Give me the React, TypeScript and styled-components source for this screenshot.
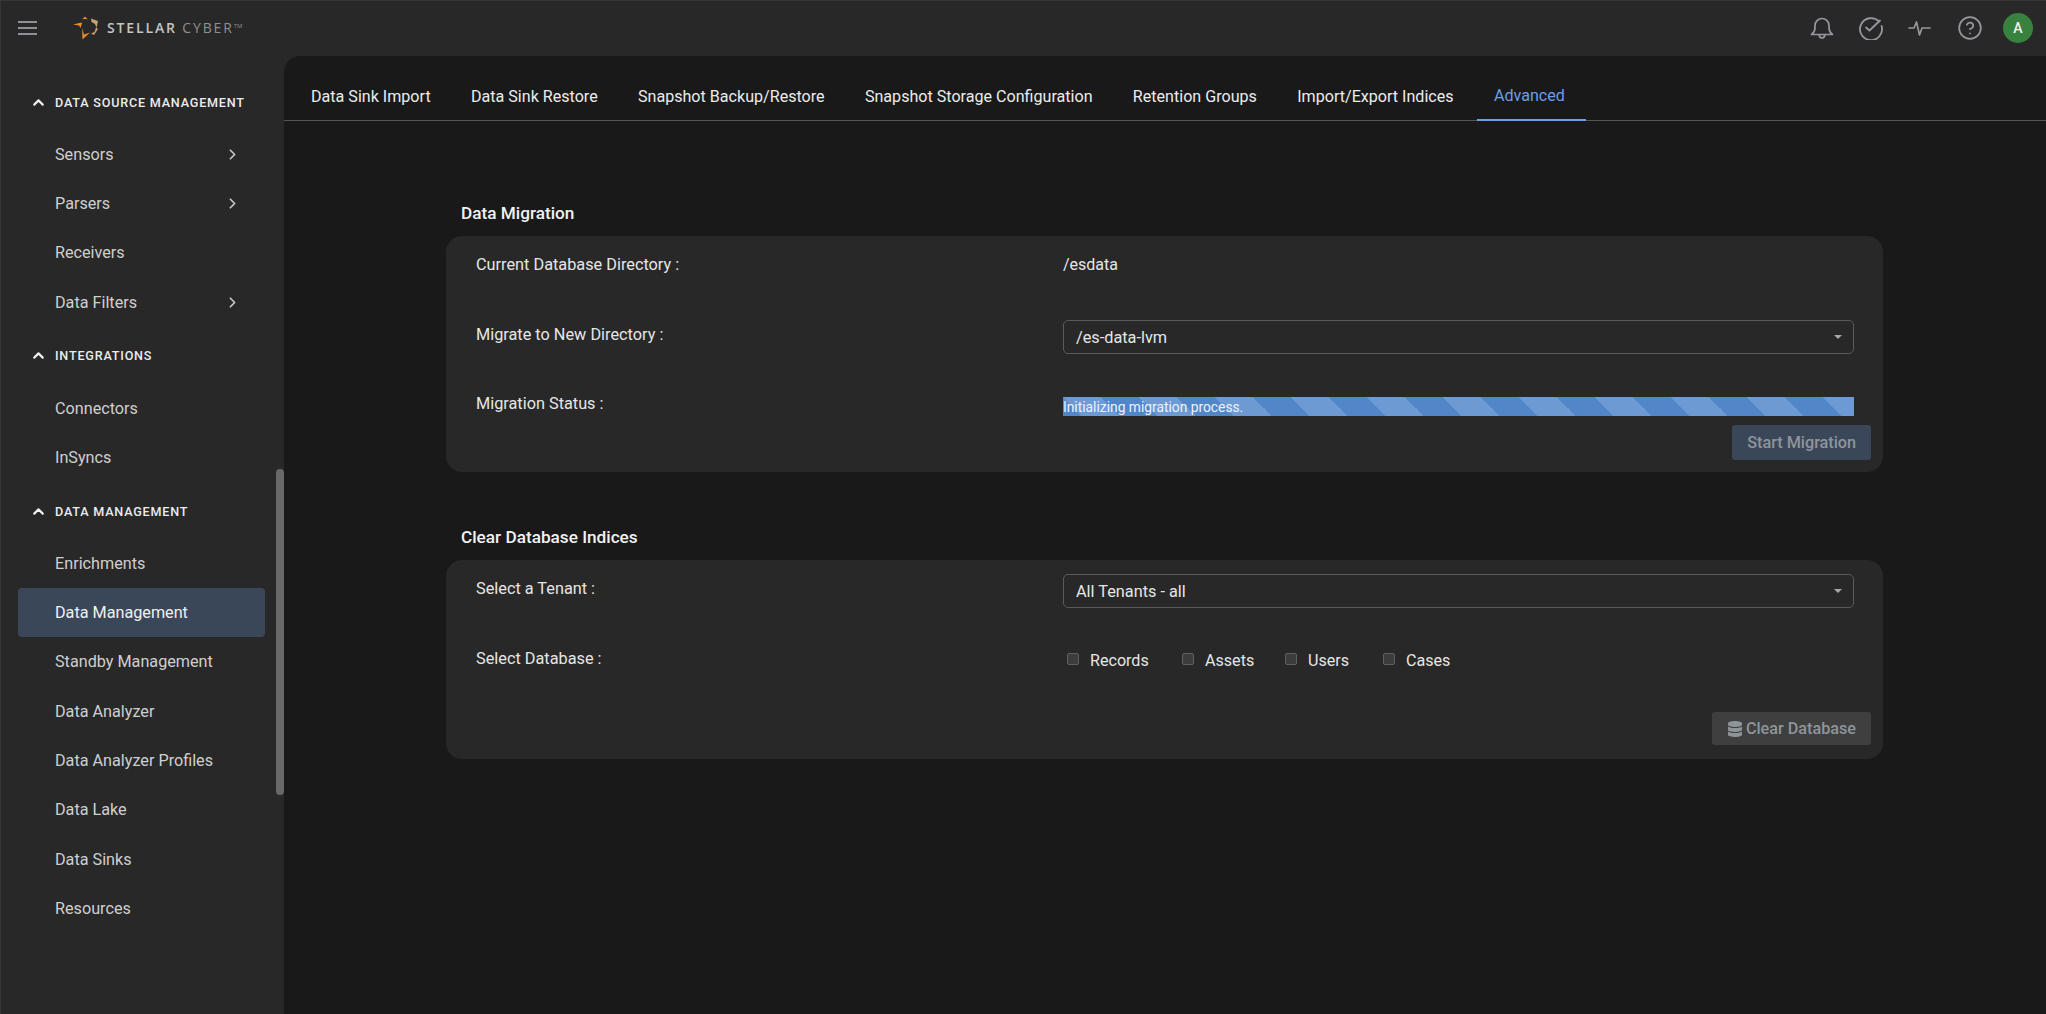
import React from 'react';
import styled, { createGlobalStyle } from 'styled-components';
import { ChevronRight, ChevronUp, CircleHelp } from 'lucide-react';
import { FaDatabase } from 'react-icons/fa';

const Global = createGlobalStyle`
  html, body { margin: 0; padding: 0; height: 100%; background: #282828; }
  #root { height: 100%; }
  * { box-sizing: border-box; }
`;

const Page = styled.div`
  width: 2046px; height: 1014px; overflow: hidden; display: flex; flex-direction: column;
  background: #282828; color: #e4e4e4; font-family: Roboto, "Liberation Sans", sans-serif; font-size: 16px;
  border-top: 1px solid #363636; border-left: 1px solid #363636;
`;
const TopBar = styled.header`
  height: 55px; flex: none; display: flex; align-items: center; padding: 0 13px 2px 17px;
`;
const Burger = styled.div`
  width: 19px; display: flex; flex-direction: column; gap: 4px; margin-right: 36px;
  & > i { display: block; height: 2px; background: #8f8f96; }
`;
const Brand = styled.div`
  display: flex; align-items: center; gap: 8px; font-family: "Open Sans", Inter, sans-serif; font-size: 14px; letter-spacing: 1.85px; color: #c4c4c4; font-weight: 600;
  & > span > em { font-style: normal; font-weight: 400; color: #8f8f8f; }
  & > span > sup { font-size: 6px; letter-spacing: 0; color: #8f8f8f; vertical-align: 5px; line-height: 0; font-weight: 400; }
`;
const TopIcons = styled.div`
  margin-left: auto; display: flex; align-items: center; gap: 25px; color: #96969e;
`;
const Avatar = styled.div`
  width: 30px; height: 30px; border-radius: 50%; background: #38823f; color: #f2f2f2; font-size: 14px; font-weight: 500;
  display: flex; align-items: center; justify-content: center; margin-left: -5px;
`;
const Body = styled.div`flex: 1; display: flex; min-height: 0;`;
const Sidebar = styled.nav`
  width: 283px; flex: none; position: relative; padding: 24px 19px 0 17px; display: flex; flex-direction: column;
`;
const ScrollThumb = styled.div`
  position: absolute; right: 0; top: 413px; width: 8px; height: 326px; border-radius: 4px; background: #686868;
`;
const GroupHead = styled.div<{ $top?: number }>`
  height: 44px; margin-top: ${p => p.$top ?? 0}px; margin-bottom: 5.5px; display: flex; align-items: center; gap: 8px; padding-left: 12px;
  font-size: 12.6px; font-weight: 500; letter-spacing: 0.8px; color: #ececec; text-transform: uppercase;
`;
const Item = styled.div<{ $active?: boolean }>`
  height: 49.3px; flex: none; display: flex; align-items: center; justify-content: space-between; padding: 0 24px 0 37px;
  border-radius: 4px; color: ${p => p.$active ? '#f0f0f0' : '#cfcfcf'}; background: ${p => p.$active ? '#3a4759' : 'transparent'};
  font-size: 16.2px;
`;
const Main = styled.main`
  flex: 1; background: #191919; border-top-left-radius: 16px; min-width: 0; display: flex; flex-direction: column;
`;
const Tabs = styled.div`
  height: 65px; flex: none; display: flex; align-items: stretch; border-bottom: 1px solid #555; padding-left: 10px; gap: 6.3px;
`;
const Tab = styled.div<{ $active?: boolean }>`
  padding: ${p => p.$active ? '15px 21px 0 17px' : '17px 17px 0'}; display: flex; align-items: center; font-size: 16.1px; margin-bottom: -1px;
  color: ${p => p.$active ? '#6d9eea' : '#ececec'}; border-bottom: 2px solid ${p => p.$active ? '#6d9eea' : 'transparent'};
`;
const Content = styled.div`padding: 82px 163px 0 162px; display: flex; flex-direction: column;`;
const SectionTitle = styled.h2`
  margin: 0 0 13px 15px; font-size: 17.2px; line-height: 20px; font-weight: 500; color: #f2f2f2;
`;
const Panel = styled.section<{ $height: number; $bottom: number }>`
  height: ${p => p.$height}px; background: #282828; border-radius: 16px; padding: 14px 12px ${p => p.$bottom}px 30px; display: flex; flex-direction: column;
  margin-bottom: 55px;
`;
const Row = styled.div<{ $height: number }>`
  height: ${p => p.$height}px; display: grid; grid-template-columns: 587px 791px; flex: none;
`;
const Label = styled.div<{ $lift?: number }>`
  font-size: 16.3px; color: #e6e6e6; padding-top: 5px; line-height: 20px; margin-top: ${p => -(p.$lift ?? 0)}px;
`;
const Value = styled.div`font-size: 16px; color: #e6e6e6; padding-top: 5px; line-height: 20px;`;
const Select = styled.div`
  height: 34px; border: 1px solid #5a5a5a; border-radius: 5px; display: flex; align-items: center; justify-content: space-between;
  padding: 0 11px 0 12px; font-size: 16.3px; color: #e6e6e6;
  &::after { content: ''; width: 0; height: 0; border-left: 4px solid transparent; border-right: 4px solid transparent; border-top: 4px solid #a8a8a8; }
`;
const Progress = styled.div`
  height: 19px; font-size: 13.8px; line-height: 20px; color: #eef3fa; white-space: nowrap; overflow: hidden;
  background-color: #5187c9;
  background-image: linear-gradient(45deg, rgba(255,255,255,.16) 25%, transparent 25%, transparent 50%, rgba(255,255,255,.16) 50%, rgba(255,255,255,.16) 75%, transparent 75%, transparent);
  background-size: 76px 76px;
`;
const Actions = styled.div`margin-top: auto; display: flex; justify-content: flex-end;`;
const Button = styled.div<{ $bg: string; $height: number }>`
  height: ${p => p.$height}px; padding: 0 15px; border-radius: 3px; background: ${p => p.$bg}; color: #8f949b; font-size: 16.2px; font-weight: 500;
  display: flex; align-items: center; gap: 3px;
`;
const Checks = styled.div`display: flex; align-items: center; height: 20px; margin-top: 5px; padding-left: 4px;`;
const Check = styled.label<{ $width: number }>`
  width: ${p => p.$width}px; display: flex; align-items: center; gap: 11px; font-size: 16.1px; color: #e6e6e6;
  & > i { width: 12px; height: 12px; border: 1px solid #606060; border-radius: 2px; background: #3c3c3c; margin-top: -2px; }
`;

const Logo = () => (
  <svg width="26" height="24" viewBox="0 0 26 24">
    <path d="M9 3.5L12 0.5 15 3.5 13 3 11 3z" fill="#e8892c" />
    <path d="M0 8.5L8.5 6.5 9 7.5 7.5 12 6 9.5z" fill="#e8892c" />
    <path d="M18 2.5L25 5 23.5 12 22 8 18.5 6z" fill="#c6a070" />
    <path d="M9 12L11 18.5 17 16.5 9.5 23.5z" fill="#e8892c" />
    <path d="M23 11.5L25 13 21 19 18 17.5 21.5 16z" fill="#c6a070" />
  </svg>
);
const BellIcon = () => (
  <svg width="24" height="24" viewBox="0 0 24 24" fill="none" stroke="currentColor" strokeWidth="1.7" strokeLinecap="round" strokeLinejoin="round">
    <path d="M1.5 18.5c2-1.5 3.5-3 3.5-6.5V9.5a7 7 0 0 1 14 0V12c0 3.5 1.5 5 3.5 6.5z" />
    <path d="M9.2 19c.3 2 1.4 3 2.8 3s2.500-1 2.800-3" />
  </svg>
);
const CheckCircle = () => (
  <svg width="24" height="24" viewBox="0 0 24 24" fill="none" stroke="currentColor" strokeWidth="1.8" strokeLinecap="round" strokeLinejoin="round">
    <path d="M20 5.5A11 11 0 1 0 22.6 10" /><path d="M7 11.500l3.500 3L21 4.500" />
  </svg>
);
const Pulse = () => (
  <svg width="24" height="22" viewBox="-1 0 24 22" fill="none" stroke="currentColor" strokeWidth="1.7" strokeLinecap="round" strokeLinejoin="round">
    <path d="M0 11h5l2.500-6 3 13 2.500-7h8" />
  </svg>
);

const Side = ({ children, more, active }: { children: string; more?: boolean; active?: boolean }) => (
  <Item $active={active}>{children}{more && <ChevronRight size={17} strokeWidth={2.4} color="#c8c8c8" />}</Item>
);
const Group = ({ children, top }: { children: string; top?: number }) => (
  <GroupHead $top={top}><ChevronUp size={17} strokeWidth={3} color="#f0f0f0" />{children}</GroupHead>
);

export default function App() {
  return (
    <Page>
      <Global />
      <TopBar>
        <Burger><i /><i /><i /></Burger>
        <Brand><Logo /><span>STELLAR <em>CYBER</em><sup>TM</sup></span></Brand>
        <TopIcons>
          <BellIcon />
          <CheckCircle />
          <Pulse />
          <CircleHelp size={26} strokeWidth={1.6} />
          <Avatar>A</Avatar>
        </TopIcons>
      </TopBar>
      <Body>
        <Sidebar>
          <Group>Data Source Management</Group>
          <Side more>Sensors</Side>
          <Side more>Parsers</Side>
          <Side>Receivers</Side>
          <Side more>Data Filters</Side>
          <Group top={7.3}>Integrations</Group>
          <Side>Connectors</Side>
          <Side>InSyncs</Side>
          <Group top={7}>Data Management</Group>
          <Side>Enrichments</Side>
          <Side active>Data Management</Side>
          <Side>Standby Management</Side>
          <Side>Data Analyzer</Side>
          <Side>Data Analyzer Profiles</Side>
          <Side>Data Lake</Side>
          <Side>Data Sinks</Side>
          <Side>Resources</Side>
          <ScrollThumb />
        </Sidebar>
        <Main>
          <Tabs>
            <Tab>Data Sink Import</Tab>
            <Tab>Data Sink Restore</Tab>
            <Tab>Snapshot Backup/Restore</Tab>
            <Tab>Snapshot Storage Configuration</Tab>
            <Tab>Retention Groups</Tab>
            <Tab>Import/Export Indices</Tab>
            <Tab $active>Advanced</Tab>
          </Tabs>
          <Content>
            <SectionTitle>Data Migration</SectionTitle>
            <Panel $height={236} $bottom={12}>
              <Row $height={70}><Label>Current Database Directory :</Label><Value>/esdata</Value></Row>
              <Row $height={77}><Label>Migrate to New Directory :</Label><Select>/es-data-lvm</Select></Row>
              <Row $height={28}><Label $lift={8}>Migration Status :</Label><Progress>Initializing migration process.</Progress></Row>
              <Actions><Button $bg="#3a4759" $height={35}>Start Migration</Button></Actions>
            </Panel>
            <SectionTitle>Clear Database Indices</SectionTitle>
            <Panel $height={199} $bottom={14}>
              <Row $height={71}><Label>Select a Tenant :</Label><Select>All Tenants - all</Select></Row>
              <Row $height={30}>
                <Label $lift={1}>Select Database :</Label>
                <Checks>
                  <Check $width={115}><i />Records</Check>
                  <Check $width={103}><i />Assets</Check>
                  <Check $width={98}><i />Users</Check>
                  <Check $width={90}><i />Cases</Check>
                </Checks>
              </Row>
              <Actions><Button $bg="#3f3f3f" $height={33}><FaDatabase size={16} />Clear Database</Button></Actions>
            </Panel>
          </Content>
        </Main>
      </Body>
    </Page>
  );
}
